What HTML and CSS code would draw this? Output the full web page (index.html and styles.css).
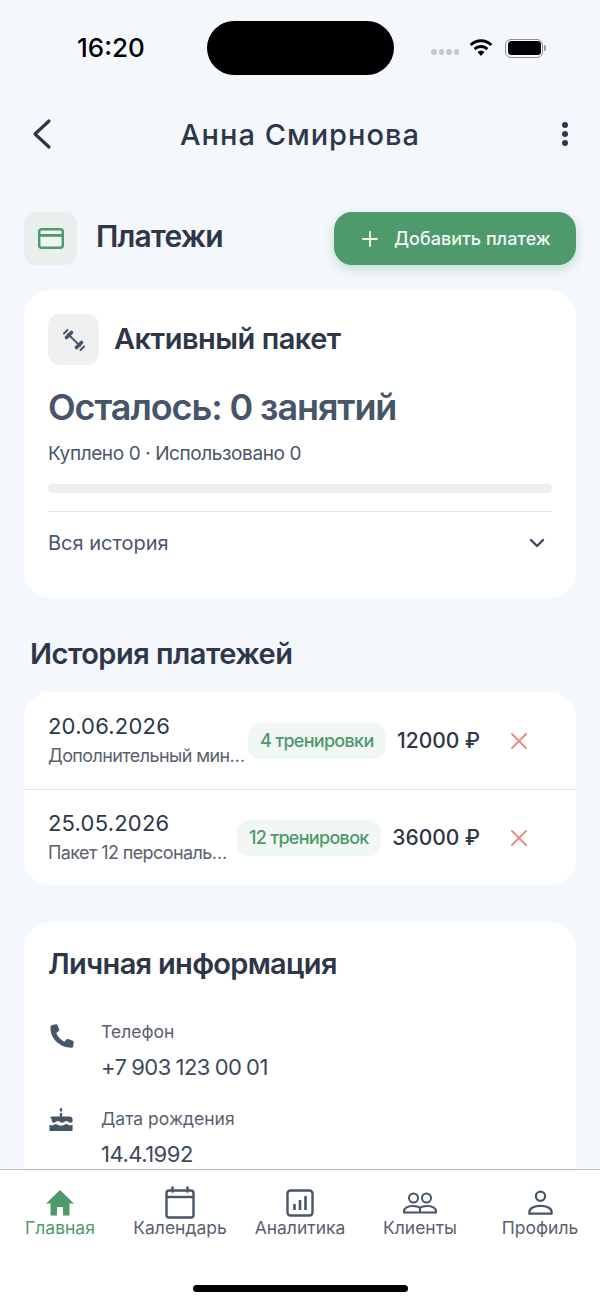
FILE: index.html
```html
<!DOCTYPE html>
<html lang="ru">
<head>
    <meta charset="UTF-8">
    <meta name="viewport" content="width=device-width, initial-scale=1.0">
    <title>Анна Смирнова</title>
    <link rel="stylesheet" href="styles.css">
</head>
<body>
    <div class="screen">
        <div class="status-bar">
            <span class="time">16:20</span>
            <div class="island"></div>
            <div class="status-icons">
                <div class="signal"><i></i><i></i><i></i><i></i></div>
                <svg class="wifi" width="26" height="19" viewBox="0 0 26 19"><path d="M13 3.200c3.600 0 6.900 1.400 9.400 3.800l1.900-2.100C21.300 2 17.300.2 13 .2S4.700 2 1.700 4.900L3.600 7C6.100 4.600 9.400 3.200 13 3.200zM13 9c2.100 0 4 .8 5.400 2.200l1.900-2.100C18.400 7.200 15.800 6 13 6S7.600 7.200 5.700 9.100l1.900 2.100C9 9.800 10.900 9 13 9zM13 11.800c-1.300 0-2.500.5-3.400 1.400l3.400 3.800 3.400-3.800c-.9-.9-2.100-1.400-3.400-1.400z" fill="#000"/></svg>
                <div class="battery"><div class="battery-fill"></div></div>
                <div class="battery-cap"></div>
            </div>
        </div>

        <div class="top-bar">
            <svg width="24" height="32" viewBox="0 0 24 32"><path d="M19 3L5 16l14 13" fill="none" stroke="#2d3748" stroke-width="3.2" stroke-linecap="round" stroke-linejoin="round"/></svg>
            <h1>Анна Смирнова</h1>
            <div class="dots"><i></i><i></i><i></i></div>
        </div>

        <div class="content">
            <div class="section-head">
                <div class="head-left">
                    <div class="icon-box green">
                        <svg width="26" height="21" viewBox="0 0 26 21"><rect x="1.2" y="1.2" width="23.6" height="18.6" rx="2.5" fill="#eef5f1" stroke="#4f9a6c" stroke-width="2.4"/><rect x="1.5" y="6" width="23" height="2.8" fill="#4f9a6c"/></svg>
                    </div>
                    <h2>Платежи</h2>
                </div>
                <button class="add-btn">
                    <svg width="16" height="16" viewBox="0 0 16 16"><path d="M8 1v14M1 8h14" stroke="#f2f7f4" stroke-width="1.8" stroke-linecap="round"/></svg>
                    Добавить платеж
                </button>
            </div>

            <div class="card package">
                <div class="package-head">
                    <div class="icon-box gray">
                        <svg width="24" height="24" viewBox="0 0 24 24"><g fill="none" stroke="#475569" stroke-linecap="round"><path d="M6 6l12 12" stroke-width="1.8"/><path d="M4.500 9.500l5-5M14.500 19.500l5-5" stroke-width="3.6"/><path d="M2 5.500L5.500 2M18.500 22l3.500-3.500" stroke-width="2"/></g></svg>
                    </div>
                    <h3>Активный пакет</h3>
                </div>
                <div class="left-count">Осталось: 0 занятий</div>
                <div class="bought">Куплено 0 · Использовано 0</div>
                <div class="progress"></div>
                <div class="history-toggle">
                    <span>Вся история</span>
                    <svg width="16" height="10" viewBox="0 0 16 10"><path d="M2 2l6 6 6-6" fill="none" stroke="#3d4a5c" stroke-width="2.4" stroke-linecap="round" stroke-linejoin="round"/></svg>
                </div>
            </div>

            <h2 class="history-title">История платежей</h2>

            <div class="card payments">
                <div class="payment">
                    <div class="payment-info one">
                        <div class="date">20.06.2026</div>
                        <div class="desc">Дополнительный мин…</div>
                    </div>
                    <span class="badge">4 тренировки</span>
                    <span class="sum">12000 ₽</span>
                    <svg class="remove" width="18" height="18" viewBox="0 0 18 18"><path d="M2 2l14 14M16 2L2 16" fill="none" stroke="#e58f85" stroke-width="2" stroke-linecap="round"/></svg>
                </div>
                <div class="payment">
                    <div class="payment-info two">
                        <div class="date">25.05.2026</div>
                        <div class="desc">Пакет 12 персональ…</div>
                    </div>
                    <span class="badge">12 тренировок</span>
                    <span class="sum">36000 ₽</span>
                    <svg class="remove" width="18" height="18" viewBox="0 0 18 18"><path d="M2 2l14 14M16 2L2 16" fill="none" stroke="#e58f85" stroke-width="2" stroke-linecap="round"/></svg>
                </div>
            </div>

            <div class="card personal">
                <h3>Личная информация</h3>
                <div class="info-row">
                    <svg class="phone-icon" width="26" height="26" viewBox="4 1.5 17 18"><path d="M6.600 2.800l2.300-.5c.6-.1 1.100.2 1.300.7l1 2.900c.2.500 0 1-.4 1.300L9.200 8.500c.9 2.400 3 4.700 5.600 5.900l1.400-1.500c.4-.4.900-.5 1.400-.3l3 1.200c.5.200.8.700.7 1.300l-.4 2.500c-.1.700-.7 1.100-1.300 1.100C11.300 18.700 4.500 11.500 5.300 4c.1-.6.600-1.100 1.300-1.200z" fill="#475569"/></svg>
                    <div>
                        <div class="info-label">Телефон</div>
                        <div class="info-value">+7 903 123 00 01</div>
                    </div>
                </div>
                <div class="info-row">
                    <svg width="26" height="26" viewBox="1 1 22 22"><path d="M12 1.500c.8 1 1.100 1.700 1.100 2.200 0 .6-.5 1.100-1.100 1.100s-1.100-.5-1.100-1.100c0-.5.300-1.200 1.100-2.200zM11 6h2v3h-2zM4.500 9h15c1.300 0 2.300 1 2.300 2.300v2.200c-1.200 1-2.300 1-3.300.2-1.200-1-2.600-1-3.800 0-1 .8-2.400.8-3.400 0-1.200-1-2.600-1-3.800 0-1 .8-2.100.8-3.300-.2v-2.200C2.200 10 3.200 9 4.500 9zM2.200 16c1.400.8 2.900.7 4.100-.2.8-.6 1.600-.6 2.400 0 1.900 1.300 4.700 1.300 6.600 0 .8-.6 1.600-.6 2.400 0 1.200.9 2.700 1 4.100.2v4.200c0 .6-.5 1.100-1.100 1.100H3.300c-.6 0-1.100-.5-1.100-1.100z" fill="#475569"/></svg>
                    <div>
                        <div class="info-label">Дата рождения</div>
                        <div class="info-value">14.4.1992</div>
                    </div>
                </div>
            </div>
        </div>

        <div class="tab-bar">
            <div class="tabs">
                <div class="tab active">
                    <div class="tab-icon"><svg width="30" height="26" viewBox="0 0 30 26"><path d="M15 0L1 13.500h4.500V25.500h6.500V17h6v8.500h6.500V13.500H29z" fill="#4f9a6c"/></svg></div>
                    <span>Главная</span>
                </div>
                <div class="tab">
                    <div class="tab-icon"><svg width="30" height="33" viewBox="0 0 30 33"><rect x="1.5" y="4.5" width="27" height="27" rx="2.5" fill="none" stroke="#475569" stroke-width="2.4"/><path d="M1.500 11h27" stroke="#475569" stroke-width="2.4"/><path d="M7.500 1.500v4M22.500 1.500v4" stroke="#475569" stroke-width="2.6" stroke-linecap="round"/></svg></div>
                    <span>Календарь</span>
                </div>
                <div class="tab">
                    <div class="tab-icon"><svg width="28" height="28" viewBox="0 0 28 28"><rect x="1.5" y="1.5" width="25" height="25" rx="3" fill="none" stroke="#475569" stroke-width="2.4"/><path d="M8.500 15v6M14 11v10M19.500 7v14" stroke="#475569" stroke-width="2.6"/></svg></div>
                    <span>Аналитика</span>
                </div>
                <div class="tab">
                    <div class="tab-icon"><svg width="34" height="22" viewBox="0 0 34 22"><g fill="none" stroke="#475569" stroke-width="2"><circle cx="10.5" cy="6" r="4.5"/><circle cx="23.5" cy="6" r="4.5"/><path d="M1 20.500v-1c0-3.500 4-5.500 8.500-5.500 3.500 0 6 .5 7.500 2 1.500-1.500 4-2 7.500-2 4.500 0 8.500 2 8.500 5.500v1zM17 16v4.500"/></g></svg></div>
                    <span>Клиенты</span>
                </div>
                <div class="tab">
                    <div class="tab-icon"><svg width="25" height="25" viewBox="0 0 26 26"><g fill="none" stroke="#475569" stroke-width="2.4"><circle cx="13" cy="6.5" r="4.8"/><path d="M1.500 24.500v-2c0-3.500 5-6 11.500-6s11.500 2.500 11.500 6v2z"/></g></svg></div>
                    <span>Профиль</span>
                </div>
            </div>
            <div class="home-indicator"></div>
        </div>
    </div>
</body>
</html>
```

FILE: styles.css
```css
* {
    box-sizing: border-box;
}
html, body {
    margin: 0;
    padding: 0;
}
body {
    font-family: Inter, "Noto Sans", sans-serif;
    background: #f4f8fc;
    color: #2d3748;
}
h1, h2, h3 {
    margin: 0;
}
.screen {
    width: 600px;
    height: 1304px;
    display: flex;
    flex-direction: column;
    overflow: hidden;
}

/* status bar */
.status-bar {
    height: 96px;
    flex: none;
    display: flex;
    align-items: flex-start;
    padding: 21px 20px 0 77px;
}
.time {
    width: 130px;
    font-size: 26px;
    font-weight: 500;
    line-height: 54px;
    color: #000;
}
.island {
    width: 187px;
    height: 54px;
    background: #000;
    border-radius: 27px;
}
.status-icons {
    display: flex;
    align-items: center;
    margin-left: 37px;
    height: 54px;
}
.signal {
    display: flex;
    gap: 2px;
    margin: 8px 9px 0 0;
}
.signal i {
    width: 5.5px;
    height: 5.5px;
    border-radius: 50%;
    background: #c6c8ca;
}
.wifi {
    margin-right: 11px;
}
.battery {
    width: 38px;
    height: 19px;
    border: 1.5px solid #8e8e8e;
    border-radius: 6px;
    padding: 1.5px;
}
.battery-fill {
    height: 100%;
    background: #000;
    border-radius: 3.5px;
}
.battery-cap {
    width: 2px;
    height: 6px;
    margin-left: 1px;
    background: #9a9a9a;
    border-radius: 0 2px 2px 0;
}

/* top bar */
.top-bar {
    height: 76px;
    flex: none;
    display: flex;
    align-items: center;
    justify-content: space-between;
    padding: 0 32px 0 30px;
}
.top-bar h1 {
    font-size: 29px;
    font-weight: 500;
    letter-spacing: 1px;
    margin-left: 2px;
}
.dots {
    width: 24px;
    display: flex;
    flex-direction: column;
    align-items: flex-end;
    gap: 2.3px;
}
.dots i {
    width: 6.5px;
    height: 6.5px;
    border-radius: 50%;
    background: #2d3748;
}

.content {
    flex: 1;
    min-height: 0;
    overflow: hidden;
    padding: 40px 24px 0;
}
.section-head {
    display: flex;
    justify-content: space-between;
    align-items: center;
}
.head-left {
    display: flex;
    align-items: center;
    gap: 19px;
}
.head-left h2 {
    font-size: 30px;
    font-weight: 600;
    letter-spacing: -0.8px;
    margin-top: -6px;
}
.icon-box {
    display: flex;
    align-items: center;
    justify-content: center;
    border-radius: 12px;
}
.icon-box.green {
    width: 53px;
    height: 53px;
    background: #e8f0ee;
}
.icon-box.gray {
    width: 51px;
    height: 51px;
    background: #eef0f2;
}
.add-btn {
    width: 242px;
    height: 53px;
    display: flex;
    align-items: center;
    gap: 16px;
    padding: 0 0 0 28px;
    border: none;
    border-radius: 18px;
    background: #4f9a6c;
    color: #f2f7f4;
    font-family: inherit;
    font-size: 18px;
    font-weight: 500;
    box-shadow: 0 4px 12px rgba(79, 154, 108, 0.3);
}
.card {
    background: #fff;
    border-radius: 26px;
}
.package {
    height: 308px;
    margin-top: 25px;
    padding: 24px;
}
.package-head {
    display: flex;
    align-items: center;
    gap: 15px;
}
.package-head h3 {
    font-size: 29px;
    font-weight: 600;
    letter-spacing: -0.5px;
    margin-top: -2px;
}
.left-count {
    margin-top: 20px;
    font-size: 36px;
    line-height: 44px;
    font-weight: 600;
    letter-spacing: -1.1px;
    color: #475569;
}
.bought {
    margin-top: 13px;
    font-size: 19px;
    line-height: 24px;
    letter-spacing: -0.4px;
    color: #4a5568;
}
.progress {
    height: 9px;
    margin-top: 18px;
    background: #eceeef;
    border-radius: 5px;
}
.history-toggle {
    display: flex;
    justify-content: space-between;
    align-items: center;
    margin-top: 18px;
    padding: 19px 7px 0 0;
    border-top: 1px solid #e2e5e8;
    font-size: 20px;
    line-height: 24px;
    color: #475569;
}
.history-title {
    margin: 36px 0 0 6px;
    font-size: 29px;
    line-height: 40px;
    font-weight: 600;
    letter-spacing: -0.5px;
}
.payments {
    margin-top: 18px;
}
.payment {
    height: 97px;
    display: flex;
    align-items: center;
    padding: 0 48px 0 24px;
}
.payment + .payment {
    height: 96px;
    border-top: 1px solid #e2e5e8;
}
.payment-info {
    flex: none;
    padding-bottom: 2px;
}
.payment-info.one {
    width: 199px;
    margin-right: 1px;
}
.payment-info.two {
    width: 182px;
    margin-right: 7px;
}
.date {
    font-size: 22px;
    line-height: 28px;
    letter-spacing: 0.2px;
}
.desc {
    margin-top: 4px;
    font-size: 18px;
    line-height: 24px;
    letter-spacing: -0.6px;
    color: #59616e;
    white-space: nowrap;
}
.badge {
    flex: none;
    height: 36px;
    padding: 0 12px;
    display: flex;
    align-items: center;
    border-radius: 12px;
    background: #f1f7f3;
    color: #4f9a6c;
    font-size: 18px;
    font-weight: 500;
    letter-spacing: -0.7px;
}
.sum {
    margin-left: auto;
    font-size: 21px;
    font-weight: 500;
    white-space: nowrap;
}
.remove {
    margin-left: 30px;
    flex: none;
}
.personal {
    margin-top: 37px;
    padding: 24px;
    height: 300px;
}
.personal h3 {
    font-size: 29px;
    line-height: 36px;
    font-weight: 600;
    letter-spacing: -0.7px;
}
.info-row {
    display: flex;
    gap: 27px;
    margin-top: 38px;
}
.info-row + .info-row {
    margin-top: 26px;
}
.phone-icon {
    margin-top: 3px;
}
.info-row svg {
    flex: none;
}
.info-label {
    font-size: 17.5px;
    line-height: 24px;
    color: #59616e;
}
.info-value {
    margin-top: 9px;
    font-size: 22px;
    line-height: 28px;
    letter-spacing: -0.5px;
    word-spacing: -1px;
    color: #3d4a5c;
}

/* bottom tabs */
.tab-bar {
    height: 135px;
    flex: none;
    background: #fff;
    border-top: 1px solid #b9bcc8;
}
.tabs {
    display: flex;
    height: 115px;
}
.tab {
    flex: 1;
    display: flex;
    flex-direction: column;
    align-items: center;
    padding-top: 16px;
    color: #59616e;
    font-size: 17.5px;
    line-height: 22px;
}
.tab span {
    margin-top: -2px;
}
.tab-icon {
    height: 33px;
    display: flex;
    align-items: center;
}
.tab.active {
    color: #4f9a6c;
}
.home-indicator {
    width: 215px;
    height: 7px;
    margin: 0 auto;
    background: #000;
    border-radius: 4px;
}
```
